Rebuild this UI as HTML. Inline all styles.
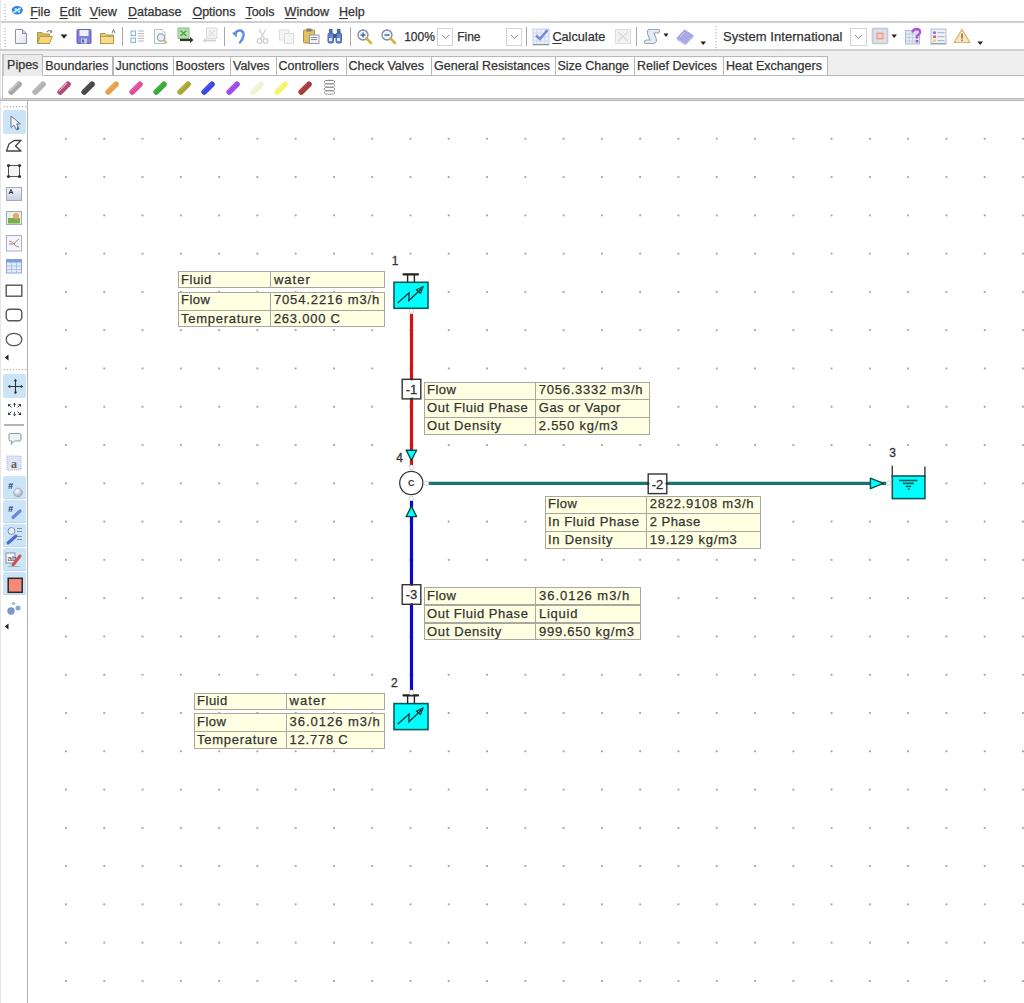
<!DOCTYPE html><html><head><meta charset="utf-8"><style>
*{margin:0;padding:0;box-sizing:border-box}
html,body{width:1024px;height:1003px;overflow:hidden;background:#fff;font-family:"Liberation Sans",sans-serif;color:#333}
.a{position:absolute}
.t{position:absolute;white-space:nowrap;line-height:1;-webkit-text-stroke:0.25px #333}
.menu span{position:absolute;top:4px;font-size:12.5px;color:#333}
.tab{position:absolute;top:56px;height:20px;border:1px solid #a8a8a8;border-bottom:none;background:#fff;font-size:12.5px;padding:3px 0 0 3px;color:#333}
.cell{font-size:13px;color:#333}
</style></head><body>
<div class="a" style="left:0;top:21px;width:1024px;height:1.5px;background:#cfcfcf"></div>
<div class="a" style="left:0;top:0;width:1px;height:1003px;background:#e6e6e6"></div>

<div class="a" style="left:0;top:49px;width:1024px;height:1.5px;background:#cfcfcf"></div>
<div class="a" style="left:2px;top:50.5px;width:1022px;height:25px;background:#efefef"></div>
<div class="a" style="left:2px;top:74.6px;width:1022px;height:1.2px;background:#b8b8b8"></div>
<div class="a" style="left:0px;top:97.7px;width:1024px;height:3.2px;background:#d2d2d2"></div>
<div class="a" style="left:2px;top:97.8px;width:1022px;height:1.1px;background:#bcbcbc"></div>
<div class="a" style="left:0px;top:99.6px;width:1024px;height:1.2px;background:#b8b8b8"></div>
<div class="a" style="left:2px;top:54px;width:1.3px;height:45px;background:#c4c4c4"></div>
<div class="a" style="left:26.5px;top:100px;width:1.5px;height:903px;background:#b0b0b0"></div>
<svg class="a" style="left:0px;top:0px" width="10" height="22" viewBox="0 0 10 22" ><rect x="4.5" y="4" width="1.2" height="1.2" fill="#b0b0b0"/><rect x="4.5" y="7" width="1.2" height="1.2" fill="#b0b0b0"/><rect x="4.5" y="10" width="1.2" height="1.2" fill="#b0b0b0"/><rect x="4.5" y="13" width="1.2" height="1.2" fill="#b0b0b0"/><rect x="4.5" y="16" width="1.2" height="1.2" fill="#b0b0b0"/><rect x="4.5" y="19" width="1.2" height="1.2" fill="#b0b0b0"/></svg>
<svg class="a" style="left:11px;top:5px" width="13" height="11" viewBox="0 0 13 11" ><ellipse cx="6.3" cy="5.3" rx="5.5" ry="4.2" fill="#2a86de"/><path d="M2.5 7.5 L9.5 3" stroke="#dff0ff" stroke-width="1.8"/><circle cx="4.8" cy="4.2" r="1.2" fill="#bfe0ff"/><circle cx="8" cy="6.5" r="1.2" fill="#bfe0ff"/></svg>
<div class="t" style="left:30.2px;top:5.8px;font-size:12.5px;color:#333"><span style="text-decoration:underline;text-underline-offset:1.5px">F</span>ile</div>
<div class="t" style="left:59.4px;top:5.8px;font-size:12.5px;color:#333"><span style="text-decoration:underline;text-underline-offset:1.5px">E</span>dit</div>
<div class="t" style="left:89.8px;top:5.8px;font-size:12.5px;color:#333"><span style="text-decoration:underline;text-underline-offset:1.5px">V</span>iew</div>
<div class="t" style="left:128px;top:5.8px;font-size:12.5px;color:#333"><span style="text-decoration:underline;text-underline-offset:1.5px">D</span>atabase</div>
<div class="t" style="left:192.4px;top:5.8px;font-size:12.5px;color:#333"><span style="text-decoration:underline;text-underline-offset:1.5px">O</span>ptions</div>
<div class="t" style="left:245.4px;top:5.8px;font-size:12.5px;color:#333"><span style="text-decoration:underline;text-underline-offset:1.5px">T</span>ools</div>
<div class="t" style="left:284.6px;top:5.8px;font-size:12.5px;color:#333"><span style="text-decoration:underline;text-underline-offset:1.5px">W</span>indow</div>
<div class="t" style="left:339px;top:5.8px;font-size:12.5px;color:#333"><span style="text-decoration:underline;text-underline-offset:1.5px">H</span>elp</div>
<svg class="a" style="left:0px;top:22px" width="10" height="28" viewBox="0 0 10 28" ><rect x="4.5" y="6" width="1.2" height="1.2" fill="#b0b0b0"/><rect x="4.5" y="9" width="1.2" height="1.2" fill="#b0b0b0"/><rect x="4.5" y="12" width="1.2" height="1.2" fill="#b0b0b0"/><rect x="4.5" y="15" width="1.2" height="1.2" fill="#b0b0b0"/><rect x="4.5" y="18" width="1.2" height="1.2" fill="#b0b0b0"/><rect x="4.5" y="21" width="1.2" height="1.2" fill="#b0b0b0"/><rect x="4.5" y="24" width="1.2" height="1.2" fill="#b0b0b0"/><rect x="4.5" y="27" width="1.2" height="1.2" fill="#b0b0b0"/></svg>
<div class="a" style="left:121.8px;top:26.5px;width:1.4px;height:19px;background:#a8a8a8"></div>
<div class="a" style="left:223.60000000000002px;top:26.5px;width:1.4px;height:19px;background:#a8a8a8"></div>
<div class="a" style="left:349.5px;top:26.5px;width:1.4px;height:19px;background:#a8a8a8"></div>
<div class="a" style="left:525.9px;top:26.5px;width:1.4px;height:19px;background:#a8a8a8"></div>
<div class="a" style="left:636.0999999999999px;top:26.5px;width:1.4px;height:19px;background:#a8a8a8"></div>
<svg class="a" style="left:714px;top:24px" width="4" height="26" viewBox="0 0 4 26" ><rect x="1.5" y="2" width="1.2" height="1.2" fill="#b8b8b8"/><rect x="1.5" y="5" width="1.2" height="1.2" fill="#b8b8b8"/><rect x="1.5" y="8" width="1.2" height="1.2" fill="#b8b8b8"/><rect x="1.5" y="11" width="1.2" height="1.2" fill="#b8b8b8"/><rect x="1.5" y="14" width="1.2" height="1.2" fill="#b8b8b8"/><rect x="1.5" y="17" width="1.2" height="1.2" fill="#b8b8b8"/><rect x="1.5" y="20" width="1.2" height="1.2" fill="#b8b8b8"/><rect x="1.5" y="23" width="1.2" height="1.2" fill="#b8b8b8"/></svg>
<svg class="a" style="left:14px;top:28px" width="14" height="17" viewBox="0 0 14 17" ><defs><linearGradient id="gd" x1="0" y1="0" x2="1" y2="1"><stop offset="0" stop-color="#fff"/><stop offset="1" stop-color="#dfe4ee"/></linearGradient></defs><path d="M1.5 1.5 H8.5 L12.5 5.5 V15.5 H1.5 Z" fill="url(#gd)" stroke="#8a93a8" stroke-width="1"/><path d="M8.5 1.5 V5.5 H12.5" fill="#c8cfdc" stroke="#8a93a8" stroke-width="1"/></svg>
<svg class="a" style="left:36px;top:28px" width="18" height="17" viewBox="0 0 18 17" ><path d="M1.5 4.5 H6 L7.5 6 H13.5 V15.5 H1.5 Z" fill="#d9b85a" stroke="#a88a3a" stroke-width="0.9"/><path d="M1.5 15.5 L4 8.5 H16.5 L13.5 15.5 Z" fill="#f4d77e" stroke="#b0923e" stroke-width="0.9"/><path d="M11 4 Q14 1 16 4" stroke="#6a7a9a" stroke-width="1.2" fill="none"/><path d="M15 2 L16.5 4.5 L14 5" fill="#6a7a9a"/></svg>
<svg class="a" style="left:59px;top:33px" width="10" height="7" viewBox="0 0 10 7" ><path d="M1.5 1.5 H8.5 L5 5.5 Z" fill="#222"/></svg>
<svg class="a" style="left:76px;top:28px" width="16" height="17" viewBox="0 0 16 17" ><rect x="1" y="1.5" width="14" height="14" rx="1" fill="#7f7fd8" stroke="#5a5ab0" stroke-width="0.9"/><rect x="3.5" y="2" width="9" height="6" fill="#eef0ff"/><rect x="5" y="10.5" width="6" height="5" fill="#c8c8f0"/><rect x="6" y="11.5" width="2" height="3" fill="#5a5ab0"/></svg>
<svg class="a" style="left:99px;top:28px" width="17" height="17" viewBox="0 0 17 17" ><path d="M1.5 5.5 H6 L7.5 7 H14.5 V15.5 H1.5 Z" fill="#e9cc70" stroke="#a88a3a" stroke-width="0.9"/><rect x="1.5" y="8.5" width="13" height="7" fill="#f6dc8c" stroke="#b0923e" stroke-width="0.8"/><path d="M13 5 L14.5 1.5 L16 5" stroke="#6a7a9a" stroke-width="1" fill="none"/></svg>
<svg class="a" style="left:129px;top:28px" width="17" height="17" viewBox="0 0 17 17" ><rect x="2" y="3" width="4.5" height="4.5" fill="#f4f8ff" stroke="#8ab0e0" stroke-width="1"/><rect x="2" y="10" width="4.5" height="4.5" fill="#f4f8ff" stroke="#8ab0e0" stroke-width="1"/><g fill="#b8b8b8"><rect x="9" y="2.5" width="6" height="1"/><rect x="9" y="5" width="6" height="1"/><rect x="9" y="7.5" width="6" height="1"/><rect x="9" y="10" width="6" height="1"/><rect x="9" y="12.5" width="6" height="1"/></g></svg>
<svg class="a" style="left:152px;top:28px" width="18" height="18" viewBox="0 0 18 18" ><path d="M2.5 1.5 H10 L13 4.5 V15.5 H2.5 Z" fill="#f8f8fa" stroke="#b0b4c0" stroke-width="0.9"/><circle cx="9" cy="9.5" r="3.6" fill="#e8eef6" stroke="#9aa4b8" stroke-width="1.1"/><path d="M11.5 12 L14.5 15" stroke="#e0a860" stroke-width="2"/></svg>
<svg class="a" style="left:177px;top:27px" width="18" height="19" viewBox="0 0 18 19" ><rect x="1" y="1" width="11" height="10.5" fill="#b8e0b0" stroke="#80b878" stroke-width="0.9"/><path d="M3.5 3.5 L9.5 9 M9.5 3.5 L3.5 9" stroke="#4aa04a" stroke-width="1.4"/><path d="M3 13 H14" stroke="#333" stroke-width="2.2"/><path d="M13 10 L16.5 13 L13 16 Z" fill="#333"/></svg>
<svg class="a" style="left:201px;top:27px" width="17" height="19" viewBox="0 0 17 19" ><rect x="5.5" y="1" width="10.5" height="10.5" fill="#f2f2f2" stroke="#dadada" stroke-width="0.9"/><path d="M8 3.5 L13.5 9 M13.5 3.5 L8 9" stroke="#dedede" stroke-width="1.1"/><path d="M3 13.5 H15" stroke="#d0d0d0" stroke-width="1.8"/><path d="M4.5 11 L1.5 13.5 L4.5 16 Z" fill="#d0d0d0"/></svg>
<svg class="a" style="left:231px;top:28px" width="15" height="16" viewBox="0 0 15 16" ><path d="M4 5.5 Q6 2 9.5 2.5 Q13 3.5 12.5 7.5 Q12 11 9 14.5" stroke="#6090e0" stroke-width="2.4" fill="none" stroke-linecap="round"/><path d="M1 5 L6.5 3 L5.5 9.5 Z" fill="#6090e0"/></svg>
<svg class="a" style="left:255px;top:27px" width="15" height="18" viewBox="0 0 15 18" ><path d="M4 2 L9.5 12 M11 2 L5.5 12" stroke="#d4d4d4" stroke-width="1.4"/><circle cx="4.5" cy="14" r="2.3" fill="none" stroke="#cfcfcf" stroke-width="1.3"/><circle cx="10.5" cy="14" r="2.3" fill="none" stroke="#cfcfcf" stroke-width="1.3"/></svg>
<svg class="a" style="left:278px;top:28px" width="18" height="17" viewBox="0 0 18 17" ><rect x="1.5" y="2" width="9" height="10" fill="#f4f4f4" stroke="#dcdcdc"/><rect x="6.5" y="5.5" width="9" height="10" fill="#f4f4f4" stroke="#dcdcdc"/></svg>
<svg class="a" style="left:302px;top:27px" width="19" height="18" viewBox="0 0 19 18" ><rect x="1.5" y="3" width="11" height="13" rx="1" fill="#e2c05c" stroke="#a8893a" stroke-width="0.9"/><rect x="4.5" y="1.5" width="5" height="3" fill="#7a7a7a"/><rect x="7.5" y="8" width="9.5" height="8.5" fill="#eef0f4" stroke="#8a93a8" stroke-width="0.9"/><rect x="9" y="10" width="6" height="1" fill="#8a93a8"/><rect x="9" y="12" width="6" height="1" fill="#8a93a8"/></svg>
<svg class="a" style="left:326px;top:27px" width="18" height="18" viewBox="0 0 18 18" ><rect x="2" y="6" width="5.5" height="10" rx="1.5" fill="#6a8ad0" stroke="#3a5aa0" stroke-width="0.9"/><rect x="10" y="6" width="5.5" height="10" rx="1.5" fill="#6a8ad0" stroke="#3a5aa0" stroke-width="0.9"/><rect x="3" y="2" width="3.5" height="5" fill="#4a6ab0"/><rect x="11" y="2" width="3.5" height="5" fill="#4a6ab0"/><rect x="7" y="7" width="3.5" height="4" fill="#3a5aa0"/><rect x="3" y="11" width="3" height="3" fill="#dfe8ff"/><rect x="11" y="11" width="3" height="3" fill="#dfe8ff"/></svg>
<svg class="a" style="left:356px;top:28px" width="17" height="17" viewBox="0 0 17 17" ><circle cx="7" cy="7" r="5" fill="#eef3fa" stroke="#7a8aa0" stroke-width="1.3"/><path d="M10.5 10.5 L15 15" stroke="#d8b040" stroke-width="2.6" stroke-linecap="round"/><path d="M4.5 7 H9.5" stroke="#4a6aa0" stroke-width="1.5"/><path d="M7 4.5 V9.5" stroke="#4a6aa0" stroke-width="1.5"/></svg>
<svg class="a" style="left:380px;top:28px" width="17" height="17" viewBox="0 0 17 17" ><circle cx="7" cy="7" r="5" fill="#eef3fa" stroke="#7a8aa0" stroke-width="1.3"/><path d="M10.5 10.5 L15 15" stroke="#d8b040" stroke-width="2.6" stroke-linecap="round"/><path d="M4.5 7 H9.5" stroke="#4a6aa0" stroke-width="1.5"/></svg>
<div class="t" style="left:404.2px;top:30.6px;font-size:12px;color:#333">100%</div>
<div class="t" style="left:457.2px;top:30.6px;font-size:12px;color:#333">Fine</div>
<div class="a" style="left:436.6px;top:27.7px;width:16px;height:18px;border:1px solid #d4d4d4;background:#fff"></div><svg class="a" style="left:440.6px;top:34px" width="9" height="6" viewBox="0 0 9 6" ><path d="M1 1 L4.5 4.5 L8 1" stroke="#888" stroke-width="1" fill="none"/></svg>
<div class="a" style="left:506.2px;top:27.7px;width:16px;height:18px;border:1px solid #d4d4d4;background:#fff"></div><svg class="a" style="left:510.2px;top:34px" width="9" height="6" viewBox="0 0 9 6" ><path d="M1 1 L4.5 4.5 L8 1" stroke="#888" stroke-width="1" fill="none"/></svg>
<div class="a" style="left:850.2px;top:27.7px;width:17px;height:18px;border:1px solid #d4d4d4;background:#fff"></div><svg class="a" style="left:854.2px;top:34px" width="9" height="6" viewBox="0 0 9 6" ><path d="M1 1 L4.5 4.5 L8 1" stroke="#888" stroke-width="1" fill="none"/></svg>
<svg class="a" style="left:532px;top:28px" width="18" height="18" viewBox="0 0 18 18" ><rect x="1" y="1" width="16" height="16" fill="#eef2fc" stroke="#b8c4dc" stroke-width="0.8"/><g stroke="#c8d4ec" stroke-width="0.8"><path d="M1 5 H17 M1 9 H17 M1 13 H17 M5 1 V17 M9 1 V17 M13 1 V17"/></g><path d="M1 16.5 H17" stroke="#9098a8" stroke-width="1.2"/><path d="M4 7.5 L8 11 L15.5 2" stroke="#7a88d8" stroke-width="2.6" fill="none"/></svg>
<div class="t" style="left:552.4px;top:30.6px;font-size:12.7px;color:#333"><span style="text-decoration:underline;text-underline-offset:1.5px">C</span>alculate</div>
<svg class="a" style="left:614px;top:27px" width="19" height="19" viewBox="0 0 19 19" ><rect x="1.5" y="2.5" width="15" height="14" fill="#f2f2f2" stroke="#dedede"/><path d="M4 5 L14 14 M14 5 L4 14" stroke="#dcdcdc" stroke-width="1.5"/></svg>
<svg class="a" style="left:643px;top:28px" width="18" height="17" viewBox="0 0 18 17" ><path d="M6 1.5 H15 Q17 1.5 16.5 3.5 Q16 5 14 5 H11 L13 10 Q14.5 14.5 11 15.5 H3 Q1 15.5 1.5 13.5 Q2 12 4 12 H7 L5 7 Q3.5 2 6 1.5 Z" fill="#e4ecf6" stroke="#98a4b8" stroke-width="1.1"/></svg>
<svg class="a" style="left:663px;top:33px" width="6" height="5" viewBox="0 0 6 5" ><path d="M0.5 0.5 H5.5 L3 4 Z" fill="#222"/></svg>
<svg class="a" style="left:676px;top:28px" width="18" height="17" viewBox="0 0 18 17" ><path d="M1 10 L8.5 2 L17 7.5 L9.5 15.5 Z" fill="#a8a8e8" stroke="#9090d0" stroke-width="0.8"/><path d="M1 10 V11.5 L9.5 17 L17 9 V7.5 L9.5 15.5 Z" fill="#d8d8f4" stroke="#a0a0d8" stroke-width="0.7"/><path d="M4 9 L9.5 3.5" stroke="#c8c8f4" stroke-width="1"/></svg>
<svg class="a" style="left:699.5px;top:41px" width="7" height="5" viewBox="0 0 7 5" ><path d="M0.5 0.5 H6 L3.2 4 Z" fill="#222"/></svg>
<div class="t" style="left:723px;top:29.7px;font-size:13px;letter-spacing:0.05px;color:#333">System International</div>
<svg class="a" style="left:871px;top:27px" width="18" height="18" viewBox="0 0 18 18" ><rect x="1.2" y="1.2" width="15.6" height="15.6" rx="1" fill="#d0d6e0" stroke="#b8c0cc" stroke-width="0.9"/><rect x="3" y="3" width="12" height="12" fill="#dde2ea"/><g fill="#f2a08c"><rect x="5.5" y="5.5" width="7" height="7"/></g><rect x="7.3" y="7.3" width="3.4" height="3.4" fill="#f4dcd4"/><g fill="#f2a08c"><rect x="4.5" y="6.5" width="1.2" height="1"/><rect x="12.3" y="6.5" width="1.2" height="1"/><rect x="4.5" y="10.5" width="1.2" height="1"/><rect x="12.3" y="10.5" width="1.2" height="1"/></g></svg>
<svg class="a" style="left:891px;top:33.5px" width="7" height="5" viewBox="0 0 7 5" ><path d="M0.5 0.5 H6 L3.2 4 Z" fill="#222"/></svg>
<svg class="a" style="left:904px;top:27px" width="20" height="19" viewBox="0 0 20 19" ><rect x="1.5" y="3.5" width="14" height="13.5" fill="#e4eaf6" stroke="#a8b4cc" stroke-width="0.9"/><g stroke="#b8c4dc" stroke-width="0.7"><path d="M1.5 7 H15.5 M1.5 10.5 H15.5 M1.5 14 H15.5 M5 3.5 V17 M8.5 3.5 V17 M12 3.5 V17"/></g><path d="M8.5 5.5 Q9 2 12.5 2 Q16.5 2 16 5.5 Q15.5 8 13 9 V11.5" stroke="#b050d8" stroke-width="2.4" fill="none"/><rect x="11.8" y="13" width="2.5" height="2.5" fill="#b050d8"/></svg>
<svg class="a" style="left:930px;top:28px" width="17" height="17" viewBox="0 0 17 17" ><rect x="1" y="1" width="15" height="15" fill="#eef2f8" stroke="#a8b4c8" stroke-width="0.9"/><rect x="1" y="15" width="15" height="1.2" fill="#9aa4b8"/><rect x="3" y="3.5" width="3" height="2.5" fill="#8080d8"/><rect x="3" y="7.5" width="3" height="2.5" fill="#e86060"/><rect x="3" y="11.5" width="3" height="2.5" fill="#e8d860"/><g fill="#b0bcd4"><rect x="7.5" y="4" width="7" height="1.2"/><rect x="7.5" y="8" width="7" height="1.2"/><rect x="7.5" y="12" width="7" height="1.2"/></g></svg>
<svg class="a" style="left:953px;top:28px" width="18" height="16" viewBox="0 0 18 16" ><path d="M9 1.5 L17 14.5 H1 Z" fill="#f8e6c0" stroke="#d8b070" stroke-width="1.2" stroke-linejoin="round"/><rect x="8.3" y="5.5" width="1.5" height="5" fill="#8a6a40"/><rect x="8.3" y="11.5" width="1.5" height="1.5" fill="#8a6a40"/></svg>
<svg class="a" style="left:976.5px;top:41px" width="7" height="5" viewBox="0 0 7 5" ><path d="M0.5 0.5 H6 L3.2 4 Z" fill="#222"/></svg>
<div class="a" style="left:2.6px;top:53.9px;width:40.1px;height:21.8px;background:#ebebeb;border:1.3px solid #c4c4c4;border-bottom:none"></div>
<div class="t" style="left:7.1px;top:58.7px;font-size:12.5px;color:#333">Pipes</div>
<div class="a" style="left:42.2px;top:55.6px;width:71.3px;height:19.2px;background:#fff;border:1.3px solid #b8b8b8;border-bottom:none"></div>
<div class="t" style="left:45.2px;top:60.3px;font-size:12.5px;color:#333">Boundaries</div>
<div class="a" style="left:112.5px;top:55.6px;width:61.0px;height:19.2px;background:#fff;border:1.3px solid #b8b8b8;border-bottom:none"></div>
<div class="t" style="left:115.5px;top:60.3px;font-size:12.5px;color:#333">Junctions</div>
<div class="a" style="left:172.5px;top:55.6px;width:58.5px;height:19.2px;background:#fff;border:1.3px solid #b8b8b8;border-bottom:none"></div>
<div class="t" style="left:175.5px;top:60.3px;font-size:12.5px;color:#333">Boosters</div>
<div class="a" style="left:230px;top:55.6px;width:46.5px;height:19.2px;background:#fff;border:1.3px solid #b8b8b8;border-bottom:none"></div>
<div class="t" style="left:233px;top:60.3px;font-size:12.5px;color:#333">Valves</div>
<div class="a" style="left:275.5px;top:55.6px;width:71.0px;height:19.2px;background:#fff;border:1.3px solid #b8b8b8;border-bottom:none"></div>
<div class="t" style="left:278.5px;top:60.3px;font-size:12.5px;color:#333">Controllers</div>
<div class="a" style="left:345.5px;top:55.6px;width:86.5px;height:19.2px;background:#fff;border:1.3px solid #b8b8b8;border-bottom:none"></div>
<div class="t" style="left:348.5px;top:60.3px;font-size:12.5px;color:#333">Check Valves</div>
<div class="a" style="left:431px;top:55.6px;width:124.5px;height:19.2px;background:#fff;border:1.3px solid #b8b8b8;border-bottom:none"></div>
<div class="t" style="left:434px;top:60.3px;font-size:12.5px;color:#333">General Resistances</div>
<div class="a" style="left:554.5px;top:55.6px;width:80.5px;height:19.2px;background:#fff;border:1.3px solid #b8b8b8;border-bottom:none"></div>
<div class="t" style="left:557.5px;top:60.3px;font-size:12.5px;color:#333">Size Change</div>
<div class="a" style="left:634px;top:55.6px;width:90px;height:19.2px;background:#fff;border:1.3px solid #b8b8b8;border-bottom:none"></div>
<div class="t" style="left:637px;top:60.3px;font-size:12.5px;color:#333">Relief Devices</div>
<div class="a" style="left:723px;top:55.6px;width:104.79999999999995px;height:19.2px;background:#fff;border:1.3px solid #b8b8b8;border-bottom:none"></div>
<div class="t" style="left:726px;top:60.3px;font-size:12.5px;color:#333">Heat Exchangers</div>
<svg class="a" style="left:7.199999999999999px;top:79.5px" width="16" height="16" viewBox="0 0 16 16" ><line x1="4.2" y1="12" x2="12" y2="4.2" stroke="#a8a8a8" stroke-width="5.6" stroke-linecap="round"/><line x1="3.2" y1="10.8" x2="10.8" y2="3.2" stroke="#d8d8d8" stroke-width="1.2" stroke-linecap="round" opacity="0.9"/></svg>
<svg class="a" style="left:31.349999999999994px;top:79.5px" width="16" height="16" viewBox="0 0 16 16" ><line x1="4.2" y1="12" x2="12" y2="4.2" stroke="#b4b4b4" stroke-width="5.6" stroke-linecap="round"/><line x1="3.2" y1="10.8" x2="10.8" y2="3.2" stroke="#c4c4c4" stroke-width="1.2" stroke-linecap="round" opacity="0.9"/></svg>
<svg class="a" style="left:55.5px;top:79.5px" width="16" height="16" viewBox="0 0 16 16" ><line x1="4.2" y1="12" x2="12" y2="4.2" stroke="#b04a7a" stroke-width="5.6" stroke-linecap="round"/><line x1="3.2" y1="10.8" x2="10.8" y2="3.2" stroke="#f8c0e0" stroke-width="1.2" stroke-linecap="round" opacity="0.9"/></svg>
<svg class="a" style="left:79.64999999999999px;top:79.5px" width="16" height="16" viewBox="0 0 16 16" ><line x1="4.2" y1="12" x2="12" y2="4.2" stroke="#484848" stroke-width="5.6" stroke-linecap="round"/><line x1="3.2" y1="10.8" x2="10.8" y2="3.2" stroke="#585858" stroke-width="1.2" stroke-linecap="round" opacity="0.9"/></svg>
<svg class="a" style="left:103.8px;top:79.5px" width="16" height="16" viewBox="0 0 16 16" ><line x1="4.2" y1="12" x2="12" y2="4.2" stroke="#e8a04a" stroke-width="5.6" stroke-linecap="round"/><line x1="3.2" y1="10.8" x2="10.8" y2="3.2" stroke="#f0b060" stroke-width="1.2" stroke-linecap="round" opacity="0.9"/></svg>
<svg class="a" style="left:127.94999999999999px;top:79.5px" width="16" height="16" viewBox="0 0 16 16" ><line x1="4.2" y1="12" x2="12" y2="4.2" stroke="#e0509a" stroke-width="5.6" stroke-linecap="round"/><line x1="3.2" y1="10.8" x2="10.8" y2="3.2" stroke="#e868a8" stroke-width="1.2" stroke-linecap="round" opacity="0.9"/></svg>
<svg class="a" style="left:152.09999999999997px;top:79.5px" width="16" height="16" viewBox="0 0 16 16" ><line x1="4.2" y1="12" x2="12" y2="4.2" stroke="#3aaa3a" stroke-width="5.6" stroke-linecap="round"/><line x1="3.2" y1="10.8" x2="10.8" y2="3.2" stroke="#50b850" stroke-width="1.2" stroke-linecap="round" opacity="0.9"/></svg>
<svg class="a" style="left:176.24999999999997px;top:79.5px" width="16" height="16" viewBox="0 0 16 16" ><line x1="4.2" y1="12" x2="12" y2="4.2" stroke="#a8a83a" stroke-width="5.6" stroke-linecap="round"/><line x1="3.2" y1="10.8" x2="10.8" y2="3.2" stroke="#b8b850" stroke-width="1.2" stroke-linecap="round" opacity="0.9"/></svg>
<svg class="a" style="left:200.39999999999998px;top:79.5px" width="16" height="16" viewBox="0 0 16 16" ><line x1="4.2" y1="12" x2="12" y2="4.2" stroke="#3a4ae0" stroke-width="5.6" stroke-linecap="round"/><line x1="3.2" y1="10.8" x2="10.8" y2="3.2" stroke="#5060e8" stroke-width="1.2" stroke-linecap="round" opacity="0.9"/></svg>
<svg class="a" style="left:224.54999999999998px;top:79.5px" width="16" height="16" viewBox="0 0 16 16" ><line x1="4.2" y1="12" x2="12" y2="4.2" stroke="#a04ae8" stroke-width="5.6" stroke-linecap="round"/><line x1="3.2" y1="10.8" x2="10.8" y2="3.2" stroke="#b060f0" stroke-width="1.2" stroke-linecap="round" opacity="0.9"/></svg>
<svg class="a" style="left:248.7px;top:79.5px" width="16" height="16" viewBox="0 0 16 16" ><line x1="4.2" y1="12" x2="12" y2="4.2" stroke="#f2f2d0" stroke-width="5.6" stroke-linecap="round"/><line x1="3.2" y1="10.8" x2="10.8" y2="3.2" stroke="#f8f8e0" stroke-width="1.2" stroke-linecap="round" opacity="0.9"/></svg>
<svg class="a" style="left:272.84999999999997px;top:79.5px" width="16" height="16" viewBox="0 0 16 16" ><line x1="4.2" y1="12" x2="12" y2="4.2" stroke="#f4f46a" stroke-width="5.6" stroke-linecap="round"/><line x1="3.2" y1="10.8" x2="10.8" y2="3.2" stroke="#f8f890" stroke-width="1.2" stroke-linecap="round" opacity="0.9"/></svg>
<svg class="a" style="left:296.99999999999994px;top:79.5px" width="16" height="16" viewBox="0 0 16 16" ><line x1="4.2" y1="12" x2="12" y2="4.2" stroke="#a83a3a" stroke-width="5.6" stroke-linecap="round"/><line x1="3.2" y1="10.8" x2="10.8" y2="3.2" stroke="#b85050" stroke-width="1.2" stroke-linecap="round" opacity="0.9"/></svg>
<svg class="a" style="left:322px;top:79px" width="15" height="18" viewBox="0 0 15 18" ><ellipse cx="7.5" cy="3" rx="5.5" ry="1.8" fill="none" stroke="#8a8a8a" stroke-width="0.9"/><ellipse cx="7.5" cy="6.5" rx="5.5" ry="1.8" fill="none" stroke="#8a8a8a" stroke-width="0.9"/><ellipse cx="7.5" cy="10" rx="5.5" ry="1.8" fill="none" stroke="#8a8a8a" stroke-width="0.9"/><ellipse cx="7.5" cy="13.5" rx="5.5" ry="1.8" fill="none" stroke="#8a8a8a" stroke-width="0.9"/><path d="M4 1.5 H11" stroke="#8a8a8a"/></svg>
<svg class="a" style="left:0px;top:105.5px" width="27" height="2" viewBox="0 0 27 2" ><rect x="4" y="0" width="1.2" height="1.2" fill="#b0b0b0"/><rect x="7" y="0" width="1.2" height="1.2" fill="#b0b0b0"/><rect x="10" y="0" width="1.2" height="1.2" fill="#b0b0b0"/><rect x="13" y="0" width="1.2" height="1.2" fill="#b0b0b0"/><rect x="16" y="0" width="1.2" height="1.2" fill="#b0b0b0"/><rect x="19" y="0" width="1.2" height="1.2" fill="#b0b0b0"/><rect x="22" y="0" width="1.2" height="1.2" fill="#b0b0b0"/><rect x="25" y="0" width="1.2" height="1.2" fill="#b0b0b0"/></svg>
<svg class="a" style="left:0px;top:369px" width="27" height="2" viewBox="0 0 27 2" ><rect x="4" y="0" width="1.2" height="1.2" fill="#b0b0b0"/><rect x="7" y="0" width="1.2" height="1.2" fill="#b0b0b0"/><rect x="10" y="0" width="1.2" height="1.2" fill="#b0b0b0"/><rect x="13" y="0" width="1.2" height="1.2" fill="#b0b0b0"/><rect x="16" y="0" width="1.2" height="1.2" fill="#b0b0b0"/><rect x="19" y="0" width="1.2" height="1.2" fill="#b0b0b0"/><rect x="22" y="0" width="1.2" height="1.2" fill="#b0b0b0"/><rect x="25" y="0" width="1.2" height="1.2" fill="#b0b0b0"/></svg>
<div class="a" style="left:2.5px;top:110px;width:23.5px;height:23.599999999999994px;background:#cce4f7;border-radius:2px"></div>
<div class="a" style="left:2.5px;top:374px;width:23.5px;height:23.80000000000001px;background:#cce4f7;border-radius:2px"></div>
<div class="a" style="left:2.5px;top:476px;width:23.5px;height:23.4px;background:#cce4f7;border-radius:2px;box-shadow:inset 0 -1px 0 #b8d8f0"></div>
<div class="a" style="left:2.5px;top:500px;width:23.5px;height:23.4px;background:#cce4f7;border-radius:2px;box-shadow:inset 0 -1px 0 #b8d8f0"></div>
<div class="a" style="left:2.5px;top:524px;width:23.5px;height:23.4px;background:#cce4f7;border-radius:2px;box-shadow:inset 0 -1px 0 #b8d8f0"></div>
<div class="a" style="left:2.5px;top:548px;width:23.5px;height:23.4px;background:#cce4f7;border-radius:2px;box-shadow:inset 0 -1px 0 #b8d8f0"></div>
<div class="a" style="left:2.5px;top:572px;width:23.5px;height:23.4px;background:#cce4f7;border-radius:2px;box-shadow:inset 0 -1px 0 #b8d8f0"></div>
<svg class="a" style="left:9.5px;top:114.5px" width="12" height="17" viewBox="0 0 12 17" ><path d="M1 1 V12.5 L4 10 L6.5 15 L9 14 L6.7 9 L10.5 9 Z" fill="#f4f6fa" stroke="#6a7890" stroke-width="1" stroke-linejoin="round"/><path d="M6.5 14.5 L9 14 L7.5 11" fill="#4a6aa0"/></svg>
<svg class="a" style="left:5px;top:139px" width="18" height="14" viewBox="0 0 18 14" ><path d="M1.5 12 L4 5 L9 1.5 H16 L10.5 7 L16 12 Z" fill="none" stroke="#444" stroke-width="1.3" stroke-linejoin="round"/></svg>
<svg class="a" style="left:6px;top:163px" width="16" height="16" viewBox="0 0 16 16" ><rect x="2.5" y="2.5" width="11" height="11" fill="#f4f6fa" stroke="#555" stroke-width="1"/><g fill="#333"><circle cx="2.5" cy="2.5" r="1.6"/><circle cx="13.5" cy="2.5" r="1.6"/><circle cx="2.5" cy="13.5" r="1.6"/><circle cx="13.5" cy="13.5" r="1.6"/></g></svg>
<svg class="a" style="left:6px;top:187px" width="16" height="15" viewBox="0 0 16 15" ><defs><linearGradient id="ga" x1="0" y1="0" x2="0" y2="1"><stop offset="0" stop-color="#f4f6fa"/><stop offset="1" stop-color="#c8cee0"/></linearGradient></defs><rect x="0.5" y="0.5" width="15" height="13" fill="url(#ga)" stroke="#a0a8c0"/><path d="M3 7 L5 2.5 L7 7 M3.7 5.5 H6.3" stroke="#333" stroke-width="1" fill="none"/></svg>
<svg class="a" style="left:6px;top:211px" width="16" height="15" viewBox="0 0 16 15" ><rect x="0.5" y="0.5" width="15" height="13" fill="#e8f0e0" stroke="#a0a8c0"/><rect x="2" y="7" width="12" height="5.5" fill="#7ab04a"/><circle cx="10" cy="5" r="3" fill="#f0a070"/></svg>
<svg class="a" style="left:6px;top:235px" width="16" height="17" viewBox="0 0 16 17" ><rect x="0.5" y="0.5" width="15" height="15.5" fill="#f4f6fa" stroke="#a8b0c8"/><path d="M3 6 Q7 7 8 9 Q10 6 13 4 M8 9 Q10 12 13 12" stroke="#c08060" stroke-width="1" fill="none"/><path d="M3 9 H7" stroke="#8090b0" stroke-width="1"/></svg>
<svg class="a" style="left:6px;top:259px" width="16" height="15" viewBox="0 0 16 15" ><rect x="0.5" y="0.5" width="15" height="13.5" fill="#e4ecf8" stroke="#8aa8d8"/><rect x="0.5" y="0.5" width="15" height="3" fill="#7aa0dc"/><g stroke="#9ab8e0" stroke-width="0.7"><path d="M0.5 7 H15.5 M0.5 10.5 H15.5 M5.5 3.5 V14 M10.5 3.5 V14"/></g></svg>
<svg class="a" style="left:5px;top:284px" width="18" height="14" viewBox="0 0 18 14" ><rect x="1.2" y="1.2" width="15.6" height="11" fill="none" stroke="#555" stroke-width="1.4"/></svg>
<svg class="a" style="left:5px;top:308px" width="18" height="15" viewBox="0 0 18 15" ><rect x="1.2" y="1.2" width="15.6" height="11.5" rx="3.5" fill="none" stroke="#555" stroke-width="1.4"/></svg>
<svg class="a" style="left:5px;top:332px" width="18" height="16" viewBox="0 0 18 16" ><ellipse cx="9" cy="7.5" rx="7.8" ry="6.2" fill="none" stroke="#555" stroke-width="1.3"/></svg>
<svg class="a" style="left:4px;top:354px" width="6" height="7" viewBox="0 0 6 7" ><path d="M4.5 0.5 V6.5 L0.8 3.5 Z" fill="#222"/></svg>
<svg class="a" style="left:7px;top:378px" width="17" height="17" viewBox="0 0 17 17" ><path d="M8.5 2 V15 M2 8.5 H15" stroke="#2a3440" stroke-width="1.1"/><path d="M8.5 0.8 L6.8 3.2 H10.2 Z M8.5 16.2 L6.8 13.8 H10.2 Z M0.8 8.5 L3.2 6.8 V10.2 Z M16.2 8.5 L13.8 6.8 V10.2 Z" fill="#2a3440"/></svg>
<svg class="a" style="left:6px;top:401px" width="17" height="17" viewBox="0 0 17 17" ><g stroke="#3a4450" stroke-width="0.9" fill="none"><path d="M3 4 L5.5 6.5 M8.5 2.5 V6 M14 4 L11.5 6.5 M3 13 L5.5 10.5 M8.5 14.5 V11 M14 13 L11.5 10.5"/></g><g fill="#3a4450"><path d="M2 3 L5 3 L2 6 Z"/><path d="M15 3 L12 3 L15 6 Z"/><path d="M2 14 L5 14 L2 11 Z"/><path d="M15 14 L12 14 L15 11 Z"/><path d="M7 4 L8.5 1.5 L10 4 Z"/><path d="M7 13 L8.5 15.5 L10 13 Z"/></g></svg>
<div class="a" style="left:4px;top:424.2px;width:20px;height:1.8px;background:#b4b4b4"></div>
<svg class="a" style="left:8px;top:432px" width="14" height="15" viewBox="0 0 14 15" ><path d="M2.5 1.5 H11.5 Q13 1.5 13 3 V7.5 Q13 9 11.5 9 H6.5 L3 12.5 L4 9 H2.5 Q1 9 1 7.5 V3 Q1 1.5 2.5 1.5 Z" fill="#f0f2f6" stroke="#8a94a4" stroke-width="1"/></svg>
<svg class="a" style="left:6px;top:455px" width="16" height="16" viewBox="0 0 16 16" ><rect x="1" y="1" width="14" height="14" fill="#dfe4f4" stroke="#b0b8dc" stroke-dasharray="1.2 0.8"/><text x="8" y="12.5" font-size="12" font-weight="bold" text-anchor="middle" fill="#606060" font-family="Liberation Serif">a</text></svg>
<svg class="a" style="left:5px;top:479px" width="19" height="19" viewBox="0 0 19 19" ><text x="3" y="10" font-size="9" font-weight="bold" font-style="italic" fill="#1a2a7a" font-family="Liberation Sans">#</text><defs><radialGradient id="sph" cx="0.4" cy="0.35" r="0.7"><stop offset="0" stop-color="#fff"/><stop offset="1" stop-color="#9aa4b4"/></radialGradient></defs><circle cx="13" cy="13.5" r="4.3" fill="url(#sph)" stroke="#8a94a8" stroke-width="0.6"/></svg>
<svg class="a" style="left:5px;top:502px" width="19" height="19" viewBox="0 0 19 19" ><text x="3" y="10" font-size="9" font-weight="bold" font-style="italic" fill="#1a2a7a" font-family="Liberation Sans">#</text><line x1="8" y1="15.5" x2="15" y2="9" stroke="#6a8ad8" stroke-width="3.2" stroke-linecap="round"/></svg>
<svg class="a" style="left:5px;top:526px" width="19" height="20" viewBox="0 0 19 20" ><circle cx="6.5" cy="5" r="3.5" fill="#e8ecf4" stroke="#8090b0"/><line x1="3" y1="17" x2="11" y2="10" stroke="#4a6ad0" stroke-width="3" stroke-linecap="round"/><g fill="#8090a0"><rect x="12" y="2" width="5" height="1"/><rect x="12" y="5" width="5" height="1"/><rect x="12" y="10" width="5" height="1"/><rect x="12" y="13" width="5" height="1"/></g></svg>
<svg class="a" style="left:5px;top:550px" width="19" height="20" viewBox="0 0 19 20" ><rect x="1" y="3" width="9" height="10" fill="#f4f6fa" stroke="#8090b0"/><text x="2.5" y="11" font-size="8" fill="#444" font-family="Liberation Sans">ab</text><path d="M8 15 L15 6" stroke="#d05050" stroke-width="3" stroke-linecap="round"/><path d="M3 16.5 H15" stroke="#90a0b8" stroke-width="0.7"/></svg>
<svg class="a" style="left:5px;top:575px" width="19" height="21" viewBox="0 0 19 21" ><rect x="3.2" y="3.3" width="14" height="14" fill="#f88878" stroke="#2a2a2a" stroke-width="1.5"/></svg>
<svg class="a" style="left:5px;top:598px" width="19" height="19" viewBox="0 0 19 19" ><circle cx="6" cy="13" r="3.7" fill="#7a9ac8"/><circle cx="13" cy="10" r="2.5" fill="#8aa8d0"/><circle cx="8.5" cy="5.5" r="1.8" fill="#b0c8c0"/></svg>
<svg class="a" style="left:4px;top:623px" width="6" height="7" viewBox="0 0 6 7" ><path d="M4.5 0.5 V6.5 L0.8 3.5 Z" fill="#222"/></svg>
<svg class="a" style="left:0;top:0" width="1024" height="1003"><g fill="#a6a6a6"><rect x="65.0" y="137.8" width="1.9" height="1.9"/><rect x="65.0" y="176.1" width="1.9" height="1.9"/><rect x="65.0" y="214.4" width="1.9" height="1.9"/><rect x="65.0" y="252.7" width="1.9" height="1.9"/><rect x="65.0" y="290.9" width="1.9" height="1.9"/><rect x="65.0" y="329.2" width="1.9" height="1.9"/><rect x="65.0" y="367.5" width="1.9" height="1.9"/><rect x="65.0" y="405.8" width="1.9" height="1.9"/><rect x="65.0" y="444.1" width="1.9" height="1.9"/><rect x="65.0" y="482.4" width="1.9" height="1.9"/><rect x="65.0" y="520.6" width="1.9" height="1.9"/><rect x="65.0" y="558.9" width="1.9" height="1.9"/><rect x="65.0" y="597.2" width="1.9" height="1.9"/><rect x="65.0" y="635.5" width="1.9" height="1.9"/><rect x="65.0" y="673.8" width="1.9" height="1.9"/><rect x="65.0" y="712.0" width="1.9" height="1.9"/><rect x="65.0" y="750.3" width="1.9" height="1.9"/><rect x="65.0" y="788.6" width="1.9" height="1.9"/><rect x="65.0" y="826.9" width="1.9" height="1.9"/><rect x="65.0" y="865.1" width="1.9" height="1.9"/><rect x="65.0" y="903.4" width="1.9" height="1.9"/><rect x="65.0" y="941.7" width="1.9" height="1.9"/><rect x="65.0" y="980.0" width="1.9" height="1.9"/><rect x="103.3" y="137.8" width="1.9" height="1.9"/><rect x="103.3" y="176.1" width="1.9" height="1.9"/><rect x="103.3" y="214.4" width="1.9" height="1.9"/><rect x="103.3" y="252.7" width="1.9" height="1.9"/><rect x="103.3" y="290.9" width="1.9" height="1.9"/><rect x="103.3" y="329.2" width="1.9" height="1.9"/><rect x="103.3" y="367.5" width="1.9" height="1.9"/><rect x="103.3" y="405.8" width="1.9" height="1.9"/><rect x="103.3" y="444.1" width="1.9" height="1.9"/><rect x="103.3" y="482.4" width="1.9" height="1.9"/><rect x="103.3" y="520.6" width="1.9" height="1.9"/><rect x="103.3" y="558.9" width="1.9" height="1.9"/><rect x="103.3" y="597.2" width="1.9" height="1.9"/><rect x="103.3" y="635.5" width="1.9" height="1.9"/><rect x="103.3" y="673.8" width="1.9" height="1.9"/><rect x="103.3" y="712.0" width="1.9" height="1.9"/><rect x="103.3" y="750.3" width="1.9" height="1.9"/><rect x="103.3" y="788.6" width="1.9" height="1.9"/><rect x="103.3" y="826.9" width="1.9" height="1.9"/><rect x="103.3" y="865.1" width="1.9" height="1.9"/><rect x="103.3" y="903.4" width="1.9" height="1.9"/><rect x="103.3" y="941.7" width="1.9" height="1.9"/><rect x="103.3" y="980.0" width="1.9" height="1.9"/><rect x="141.6" y="137.8" width="1.9" height="1.9"/><rect x="141.6" y="176.1" width="1.9" height="1.9"/><rect x="141.6" y="214.4" width="1.9" height="1.9"/><rect x="141.6" y="252.7" width="1.9" height="1.9"/><rect x="141.6" y="290.9" width="1.9" height="1.9"/><rect x="141.6" y="329.2" width="1.9" height="1.9"/><rect x="141.6" y="367.5" width="1.9" height="1.9"/><rect x="141.6" y="405.8" width="1.9" height="1.9"/><rect x="141.6" y="444.1" width="1.9" height="1.9"/><rect x="141.6" y="482.4" width="1.9" height="1.9"/><rect x="141.6" y="520.6" width="1.9" height="1.9"/><rect x="141.6" y="558.9" width="1.9" height="1.9"/><rect x="141.6" y="597.2" width="1.9" height="1.9"/><rect x="141.6" y="635.5" width="1.9" height="1.9"/><rect x="141.6" y="673.8" width="1.9" height="1.9"/><rect x="141.6" y="712.0" width="1.9" height="1.9"/><rect x="141.6" y="750.3" width="1.9" height="1.9"/><rect x="141.6" y="788.6" width="1.9" height="1.9"/><rect x="141.6" y="826.9" width="1.9" height="1.9"/><rect x="141.6" y="865.1" width="1.9" height="1.9"/><rect x="141.6" y="903.4" width="1.9" height="1.9"/><rect x="141.6" y="941.7" width="1.9" height="1.9"/><rect x="141.6" y="980.0" width="1.9" height="1.9"/><rect x="179.9" y="137.8" width="1.9" height="1.9"/><rect x="179.9" y="176.1" width="1.9" height="1.9"/><rect x="179.9" y="214.4" width="1.9" height="1.9"/><rect x="179.9" y="252.7" width="1.9" height="1.9"/><rect x="179.9" y="290.9" width="1.9" height="1.9"/><rect x="179.9" y="329.2" width="1.9" height="1.9"/><rect x="179.9" y="367.5" width="1.9" height="1.9"/><rect x="179.9" y="405.8" width="1.9" height="1.9"/><rect x="179.9" y="444.1" width="1.9" height="1.9"/><rect x="179.9" y="482.4" width="1.9" height="1.9"/><rect x="179.9" y="520.6" width="1.9" height="1.9"/><rect x="179.9" y="558.9" width="1.9" height="1.9"/><rect x="179.9" y="597.2" width="1.9" height="1.9"/><rect x="179.9" y="635.5" width="1.9" height="1.9"/><rect x="179.9" y="673.8" width="1.9" height="1.9"/><rect x="179.9" y="712.0" width="1.9" height="1.9"/><rect x="179.9" y="750.3" width="1.9" height="1.9"/><rect x="179.9" y="788.6" width="1.9" height="1.9"/><rect x="179.9" y="826.9" width="1.9" height="1.9"/><rect x="179.9" y="865.1" width="1.9" height="1.9"/><rect x="179.9" y="903.4" width="1.9" height="1.9"/><rect x="179.9" y="941.7" width="1.9" height="1.9"/><rect x="179.9" y="980.0" width="1.9" height="1.9"/><rect x="218.2" y="137.8" width="1.9" height="1.9"/><rect x="218.2" y="176.1" width="1.9" height="1.9"/><rect x="218.2" y="214.4" width="1.9" height="1.9"/><rect x="218.2" y="252.7" width="1.9" height="1.9"/><rect x="218.2" y="290.9" width="1.9" height="1.9"/><rect x="218.2" y="329.2" width="1.9" height="1.9"/><rect x="218.2" y="367.5" width="1.9" height="1.9"/><rect x="218.2" y="405.8" width="1.9" height="1.9"/><rect x="218.2" y="444.1" width="1.9" height="1.9"/><rect x="218.2" y="482.4" width="1.9" height="1.9"/><rect x="218.2" y="520.6" width="1.9" height="1.9"/><rect x="218.2" y="558.9" width="1.9" height="1.9"/><rect x="218.2" y="597.2" width="1.9" height="1.9"/><rect x="218.2" y="635.5" width="1.9" height="1.9"/><rect x="218.2" y="673.8" width="1.9" height="1.9"/><rect x="218.2" y="712.0" width="1.9" height="1.9"/><rect x="218.2" y="750.3" width="1.9" height="1.9"/><rect x="218.2" y="788.6" width="1.9" height="1.9"/><rect x="218.2" y="826.9" width="1.9" height="1.9"/><rect x="218.2" y="865.1" width="1.9" height="1.9"/><rect x="218.2" y="903.4" width="1.9" height="1.9"/><rect x="218.2" y="941.7" width="1.9" height="1.9"/><rect x="218.2" y="980.0" width="1.9" height="1.9"/><rect x="256.4" y="137.8" width="1.9" height="1.9"/><rect x="256.4" y="176.1" width="1.9" height="1.9"/><rect x="256.4" y="214.4" width="1.9" height="1.9"/><rect x="256.4" y="252.7" width="1.9" height="1.9"/><rect x="256.4" y="290.9" width="1.9" height="1.9"/><rect x="256.4" y="329.2" width="1.9" height="1.9"/><rect x="256.4" y="367.5" width="1.9" height="1.9"/><rect x="256.4" y="405.8" width="1.9" height="1.9"/><rect x="256.4" y="444.1" width="1.9" height="1.9"/><rect x="256.4" y="482.4" width="1.9" height="1.9"/><rect x="256.4" y="520.6" width="1.9" height="1.9"/><rect x="256.4" y="558.9" width="1.9" height="1.9"/><rect x="256.4" y="597.2" width="1.9" height="1.9"/><rect x="256.4" y="635.5" width="1.9" height="1.9"/><rect x="256.4" y="673.8" width="1.9" height="1.9"/><rect x="256.4" y="712.0" width="1.9" height="1.9"/><rect x="256.4" y="750.3" width="1.9" height="1.9"/><rect x="256.4" y="788.6" width="1.9" height="1.9"/><rect x="256.4" y="826.9" width="1.9" height="1.9"/><rect x="256.4" y="865.1" width="1.9" height="1.9"/><rect x="256.4" y="903.4" width="1.9" height="1.9"/><rect x="256.4" y="941.7" width="1.9" height="1.9"/><rect x="256.4" y="980.0" width="1.9" height="1.9"/><rect x="294.7" y="137.8" width="1.9" height="1.9"/><rect x="294.7" y="176.1" width="1.9" height="1.9"/><rect x="294.7" y="214.4" width="1.9" height="1.9"/><rect x="294.7" y="252.7" width="1.9" height="1.9"/><rect x="294.7" y="290.9" width="1.9" height="1.9"/><rect x="294.7" y="329.2" width="1.9" height="1.9"/><rect x="294.7" y="367.5" width="1.9" height="1.9"/><rect x="294.7" y="405.8" width="1.9" height="1.9"/><rect x="294.7" y="444.1" width="1.9" height="1.9"/><rect x="294.7" y="482.4" width="1.9" height="1.9"/><rect x="294.7" y="520.6" width="1.9" height="1.9"/><rect x="294.7" y="558.9" width="1.9" height="1.9"/><rect x="294.7" y="597.2" width="1.9" height="1.9"/><rect x="294.7" y="635.5" width="1.9" height="1.9"/><rect x="294.7" y="673.8" width="1.9" height="1.9"/><rect x="294.7" y="712.0" width="1.9" height="1.9"/><rect x="294.7" y="750.3" width="1.9" height="1.9"/><rect x="294.7" y="788.6" width="1.9" height="1.9"/><rect x="294.7" y="826.9" width="1.9" height="1.9"/><rect x="294.7" y="865.1" width="1.9" height="1.9"/><rect x="294.7" y="903.4" width="1.9" height="1.9"/><rect x="294.7" y="941.7" width="1.9" height="1.9"/><rect x="294.7" y="980.0" width="1.9" height="1.9"/><rect x="333.0" y="137.8" width="1.9" height="1.9"/><rect x="333.0" y="176.1" width="1.9" height="1.9"/><rect x="333.0" y="214.4" width="1.9" height="1.9"/><rect x="333.0" y="252.7" width="1.9" height="1.9"/><rect x="333.0" y="290.9" width="1.9" height="1.9"/><rect x="333.0" y="329.2" width="1.9" height="1.9"/><rect x="333.0" y="367.5" width="1.9" height="1.9"/><rect x="333.0" y="405.8" width="1.9" height="1.9"/><rect x="333.0" y="444.1" width="1.9" height="1.9"/><rect x="333.0" y="482.4" width="1.9" height="1.9"/><rect x="333.0" y="520.6" width="1.9" height="1.9"/><rect x="333.0" y="558.9" width="1.9" height="1.9"/><rect x="333.0" y="597.2" width="1.9" height="1.9"/><rect x="333.0" y="635.5" width="1.9" height="1.9"/><rect x="333.0" y="673.8" width="1.9" height="1.9"/><rect x="333.0" y="712.0" width="1.9" height="1.9"/><rect x="333.0" y="750.3" width="1.9" height="1.9"/><rect x="333.0" y="788.6" width="1.9" height="1.9"/><rect x="333.0" y="826.9" width="1.9" height="1.9"/><rect x="333.0" y="865.1" width="1.9" height="1.9"/><rect x="333.0" y="903.4" width="1.9" height="1.9"/><rect x="333.0" y="941.7" width="1.9" height="1.9"/><rect x="333.0" y="980.0" width="1.9" height="1.9"/><rect x="371.3" y="137.8" width="1.9" height="1.9"/><rect x="371.3" y="176.1" width="1.9" height="1.9"/><rect x="371.3" y="214.4" width="1.9" height="1.9"/><rect x="371.3" y="252.7" width="1.9" height="1.9"/><rect x="371.3" y="290.9" width="1.9" height="1.9"/><rect x="371.3" y="329.2" width="1.9" height="1.9"/><rect x="371.3" y="367.5" width="1.9" height="1.9"/><rect x="371.3" y="405.8" width="1.9" height="1.9"/><rect x="371.3" y="444.1" width="1.9" height="1.9"/><rect x="371.3" y="482.4" width="1.9" height="1.9"/><rect x="371.3" y="520.6" width="1.9" height="1.9"/><rect x="371.3" y="558.9" width="1.9" height="1.9"/><rect x="371.3" y="597.2" width="1.9" height="1.9"/><rect x="371.3" y="635.5" width="1.9" height="1.9"/><rect x="371.3" y="673.8" width="1.9" height="1.9"/><rect x="371.3" y="712.0" width="1.9" height="1.9"/><rect x="371.3" y="750.3" width="1.9" height="1.9"/><rect x="371.3" y="788.6" width="1.9" height="1.9"/><rect x="371.3" y="826.9" width="1.9" height="1.9"/><rect x="371.3" y="865.1" width="1.9" height="1.9"/><rect x="371.3" y="903.4" width="1.9" height="1.9"/><rect x="371.3" y="941.7" width="1.9" height="1.9"/><rect x="371.3" y="980.0" width="1.9" height="1.9"/><rect x="409.6" y="137.8" width="1.9" height="1.9"/><rect x="409.6" y="176.1" width="1.9" height="1.9"/><rect x="409.6" y="214.4" width="1.9" height="1.9"/><rect x="409.6" y="252.7" width="1.9" height="1.9"/><rect x="409.6" y="290.9" width="1.9" height="1.9"/><rect x="409.6" y="329.2" width="1.9" height="1.9"/><rect x="409.6" y="367.5" width="1.9" height="1.9"/><rect x="409.6" y="405.8" width="1.9" height="1.9"/><rect x="409.6" y="444.1" width="1.9" height="1.9"/><rect x="409.6" y="482.4" width="1.9" height="1.9"/><rect x="409.6" y="520.6" width="1.9" height="1.9"/><rect x="409.6" y="558.9" width="1.9" height="1.9"/><rect x="409.6" y="597.2" width="1.9" height="1.9"/><rect x="409.6" y="635.5" width="1.9" height="1.9"/><rect x="409.6" y="673.8" width="1.9" height="1.9"/><rect x="409.6" y="712.0" width="1.9" height="1.9"/><rect x="409.6" y="750.3" width="1.9" height="1.9"/><rect x="409.6" y="788.6" width="1.9" height="1.9"/><rect x="409.6" y="826.9" width="1.9" height="1.9"/><rect x="409.6" y="865.1" width="1.9" height="1.9"/><rect x="409.6" y="903.4" width="1.9" height="1.9"/><rect x="409.6" y="941.7" width="1.9" height="1.9"/><rect x="409.6" y="980.0" width="1.9" height="1.9"/><rect x="447.8" y="137.8" width="1.9" height="1.9"/><rect x="447.8" y="176.1" width="1.9" height="1.9"/><rect x="447.8" y="214.4" width="1.9" height="1.9"/><rect x="447.8" y="252.7" width="1.9" height="1.9"/><rect x="447.8" y="290.9" width="1.9" height="1.9"/><rect x="447.8" y="329.2" width="1.9" height="1.9"/><rect x="447.8" y="367.5" width="1.9" height="1.9"/><rect x="447.8" y="405.8" width="1.9" height="1.9"/><rect x="447.8" y="444.1" width="1.9" height="1.9"/><rect x="447.8" y="482.4" width="1.9" height="1.9"/><rect x="447.8" y="520.6" width="1.9" height="1.9"/><rect x="447.8" y="558.9" width="1.9" height="1.9"/><rect x="447.8" y="597.2" width="1.9" height="1.9"/><rect x="447.8" y="635.5" width="1.9" height="1.9"/><rect x="447.8" y="673.8" width="1.9" height="1.9"/><rect x="447.8" y="712.0" width="1.9" height="1.9"/><rect x="447.8" y="750.3" width="1.9" height="1.9"/><rect x="447.8" y="788.6" width="1.9" height="1.9"/><rect x="447.8" y="826.9" width="1.9" height="1.9"/><rect x="447.8" y="865.1" width="1.9" height="1.9"/><rect x="447.8" y="903.4" width="1.9" height="1.9"/><rect x="447.8" y="941.7" width="1.9" height="1.9"/><rect x="447.8" y="980.0" width="1.9" height="1.9"/><rect x="486.1" y="137.8" width="1.9" height="1.9"/><rect x="486.1" y="176.1" width="1.9" height="1.9"/><rect x="486.1" y="214.4" width="1.9" height="1.9"/><rect x="486.1" y="252.7" width="1.9" height="1.9"/><rect x="486.1" y="290.9" width="1.9" height="1.9"/><rect x="486.1" y="329.2" width="1.9" height="1.9"/><rect x="486.1" y="367.5" width="1.9" height="1.9"/><rect x="486.1" y="405.8" width="1.9" height="1.9"/><rect x="486.1" y="444.1" width="1.9" height="1.9"/><rect x="486.1" y="482.4" width="1.9" height="1.9"/><rect x="486.1" y="520.6" width="1.9" height="1.9"/><rect x="486.1" y="558.9" width="1.9" height="1.9"/><rect x="486.1" y="597.2" width="1.9" height="1.9"/><rect x="486.1" y="635.5" width="1.9" height="1.9"/><rect x="486.1" y="673.8" width="1.9" height="1.9"/><rect x="486.1" y="712.0" width="1.9" height="1.9"/><rect x="486.1" y="750.3" width="1.9" height="1.9"/><rect x="486.1" y="788.6" width="1.9" height="1.9"/><rect x="486.1" y="826.9" width="1.9" height="1.9"/><rect x="486.1" y="865.1" width="1.9" height="1.9"/><rect x="486.1" y="903.4" width="1.9" height="1.9"/><rect x="486.1" y="941.7" width="1.9" height="1.9"/><rect x="486.1" y="980.0" width="1.9" height="1.9"/><rect x="524.4" y="137.8" width="1.9" height="1.9"/><rect x="524.4" y="176.1" width="1.9" height="1.9"/><rect x="524.4" y="214.4" width="1.9" height="1.9"/><rect x="524.4" y="252.7" width="1.9" height="1.9"/><rect x="524.4" y="290.9" width="1.9" height="1.9"/><rect x="524.4" y="329.2" width="1.9" height="1.9"/><rect x="524.4" y="367.5" width="1.9" height="1.9"/><rect x="524.4" y="405.8" width="1.9" height="1.9"/><rect x="524.4" y="444.1" width="1.9" height="1.9"/><rect x="524.4" y="482.4" width="1.9" height="1.9"/><rect x="524.4" y="520.6" width="1.9" height="1.9"/><rect x="524.4" y="558.9" width="1.9" height="1.9"/><rect x="524.4" y="597.2" width="1.9" height="1.9"/><rect x="524.4" y="635.5" width="1.9" height="1.9"/><rect x="524.4" y="673.8" width="1.9" height="1.9"/><rect x="524.4" y="712.0" width="1.9" height="1.9"/><rect x="524.4" y="750.3" width="1.9" height="1.9"/><rect x="524.4" y="788.6" width="1.9" height="1.9"/><rect x="524.4" y="826.9" width="1.9" height="1.9"/><rect x="524.4" y="865.1" width="1.9" height="1.9"/><rect x="524.4" y="903.4" width="1.9" height="1.9"/><rect x="524.4" y="941.7" width="1.9" height="1.9"/><rect x="524.4" y="980.0" width="1.9" height="1.9"/><rect x="562.7" y="137.8" width="1.9" height="1.9"/><rect x="562.7" y="176.1" width="1.9" height="1.9"/><rect x="562.7" y="214.4" width="1.9" height="1.9"/><rect x="562.7" y="252.7" width="1.9" height="1.9"/><rect x="562.7" y="290.9" width="1.9" height="1.9"/><rect x="562.7" y="329.2" width="1.9" height="1.9"/><rect x="562.7" y="367.5" width="1.9" height="1.9"/><rect x="562.7" y="405.8" width="1.9" height="1.9"/><rect x="562.7" y="444.1" width="1.9" height="1.9"/><rect x="562.7" y="482.4" width="1.9" height="1.9"/><rect x="562.7" y="520.6" width="1.9" height="1.9"/><rect x="562.7" y="558.9" width="1.9" height="1.9"/><rect x="562.7" y="597.2" width="1.9" height="1.9"/><rect x="562.7" y="635.5" width="1.9" height="1.9"/><rect x="562.7" y="673.8" width="1.9" height="1.9"/><rect x="562.7" y="712.0" width="1.9" height="1.9"/><rect x="562.7" y="750.3" width="1.9" height="1.9"/><rect x="562.7" y="788.6" width="1.9" height="1.9"/><rect x="562.7" y="826.9" width="1.9" height="1.9"/><rect x="562.7" y="865.1" width="1.9" height="1.9"/><rect x="562.7" y="903.4" width="1.9" height="1.9"/><rect x="562.7" y="941.7" width="1.9" height="1.9"/><rect x="562.7" y="980.0" width="1.9" height="1.9"/><rect x="601.0" y="137.8" width="1.9" height="1.9"/><rect x="601.0" y="176.1" width="1.9" height="1.9"/><rect x="601.0" y="214.4" width="1.9" height="1.9"/><rect x="601.0" y="252.7" width="1.9" height="1.9"/><rect x="601.0" y="290.9" width="1.9" height="1.9"/><rect x="601.0" y="329.2" width="1.9" height="1.9"/><rect x="601.0" y="367.5" width="1.9" height="1.9"/><rect x="601.0" y="405.8" width="1.9" height="1.9"/><rect x="601.0" y="444.1" width="1.9" height="1.9"/><rect x="601.0" y="482.4" width="1.9" height="1.9"/><rect x="601.0" y="520.6" width="1.9" height="1.9"/><rect x="601.0" y="558.9" width="1.9" height="1.9"/><rect x="601.0" y="597.2" width="1.9" height="1.9"/><rect x="601.0" y="635.5" width="1.9" height="1.9"/><rect x="601.0" y="673.8" width="1.9" height="1.9"/><rect x="601.0" y="712.0" width="1.9" height="1.9"/><rect x="601.0" y="750.3" width="1.9" height="1.9"/><rect x="601.0" y="788.6" width="1.9" height="1.9"/><rect x="601.0" y="826.9" width="1.9" height="1.9"/><rect x="601.0" y="865.1" width="1.9" height="1.9"/><rect x="601.0" y="903.4" width="1.9" height="1.9"/><rect x="601.0" y="941.7" width="1.9" height="1.9"/><rect x="601.0" y="980.0" width="1.9" height="1.9"/><rect x="639.2" y="137.8" width="1.9" height="1.9"/><rect x="639.2" y="176.1" width="1.9" height="1.9"/><rect x="639.2" y="214.4" width="1.9" height="1.9"/><rect x="639.2" y="252.7" width="1.9" height="1.9"/><rect x="639.2" y="290.9" width="1.9" height="1.9"/><rect x="639.2" y="329.2" width="1.9" height="1.9"/><rect x="639.2" y="367.5" width="1.9" height="1.9"/><rect x="639.2" y="405.8" width="1.9" height="1.9"/><rect x="639.2" y="444.1" width="1.9" height="1.9"/><rect x="639.2" y="482.4" width="1.9" height="1.9"/><rect x="639.2" y="520.6" width="1.9" height="1.9"/><rect x="639.2" y="558.9" width="1.9" height="1.9"/><rect x="639.2" y="597.2" width="1.9" height="1.9"/><rect x="639.2" y="635.5" width="1.9" height="1.9"/><rect x="639.2" y="673.8" width="1.9" height="1.9"/><rect x="639.2" y="712.0" width="1.9" height="1.9"/><rect x="639.2" y="750.3" width="1.9" height="1.9"/><rect x="639.2" y="788.6" width="1.9" height="1.9"/><rect x="639.2" y="826.9" width="1.9" height="1.9"/><rect x="639.2" y="865.1" width="1.9" height="1.9"/><rect x="639.2" y="903.4" width="1.9" height="1.9"/><rect x="639.2" y="941.7" width="1.9" height="1.9"/><rect x="639.2" y="980.0" width="1.9" height="1.9"/><rect x="677.5" y="137.8" width="1.9" height="1.9"/><rect x="677.5" y="176.1" width="1.9" height="1.9"/><rect x="677.5" y="214.4" width="1.9" height="1.9"/><rect x="677.5" y="252.7" width="1.9" height="1.9"/><rect x="677.5" y="290.9" width="1.9" height="1.9"/><rect x="677.5" y="329.2" width="1.9" height="1.9"/><rect x="677.5" y="367.5" width="1.9" height="1.9"/><rect x="677.5" y="405.8" width="1.9" height="1.9"/><rect x="677.5" y="444.1" width="1.9" height="1.9"/><rect x="677.5" y="482.4" width="1.9" height="1.9"/><rect x="677.5" y="520.6" width="1.9" height="1.9"/><rect x="677.5" y="558.9" width="1.9" height="1.9"/><rect x="677.5" y="597.2" width="1.9" height="1.9"/><rect x="677.5" y="635.5" width="1.9" height="1.9"/><rect x="677.5" y="673.8" width="1.9" height="1.9"/><rect x="677.5" y="712.0" width="1.9" height="1.9"/><rect x="677.5" y="750.3" width="1.9" height="1.9"/><rect x="677.5" y="788.6" width="1.9" height="1.9"/><rect x="677.5" y="826.9" width="1.9" height="1.9"/><rect x="677.5" y="865.1" width="1.9" height="1.9"/><rect x="677.5" y="903.4" width="1.9" height="1.9"/><rect x="677.5" y="941.7" width="1.9" height="1.9"/><rect x="677.5" y="980.0" width="1.9" height="1.9"/><rect x="715.8" y="137.8" width="1.9" height="1.9"/><rect x="715.8" y="176.1" width="1.9" height="1.9"/><rect x="715.8" y="214.4" width="1.9" height="1.9"/><rect x="715.8" y="252.7" width="1.9" height="1.9"/><rect x="715.8" y="290.9" width="1.9" height="1.9"/><rect x="715.8" y="329.2" width="1.9" height="1.9"/><rect x="715.8" y="367.5" width="1.9" height="1.9"/><rect x="715.8" y="405.8" width="1.9" height="1.9"/><rect x="715.8" y="444.1" width="1.9" height="1.9"/><rect x="715.8" y="482.4" width="1.9" height="1.9"/><rect x="715.8" y="520.6" width="1.9" height="1.9"/><rect x="715.8" y="558.9" width="1.9" height="1.9"/><rect x="715.8" y="597.2" width="1.9" height="1.9"/><rect x="715.8" y="635.5" width="1.9" height="1.9"/><rect x="715.8" y="673.8" width="1.9" height="1.9"/><rect x="715.8" y="712.0" width="1.9" height="1.9"/><rect x="715.8" y="750.3" width="1.9" height="1.9"/><rect x="715.8" y="788.6" width="1.9" height="1.9"/><rect x="715.8" y="826.9" width="1.9" height="1.9"/><rect x="715.8" y="865.1" width="1.9" height="1.9"/><rect x="715.8" y="903.4" width="1.9" height="1.9"/><rect x="715.8" y="941.7" width="1.9" height="1.9"/><rect x="715.8" y="980.0" width="1.9" height="1.9"/><rect x="754.1" y="137.8" width="1.9" height="1.9"/><rect x="754.1" y="176.1" width="1.9" height="1.9"/><rect x="754.1" y="214.4" width="1.9" height="1.9"/><rect x="754.1" y="252.7" width="1.9" height="1.9"/><rect x="754.1" y="290.9" width="1.9" height="1.9"/><rect x="754.1" y="329.2" width="1.9" height="1.9"/><rect x="754.1" y="367.5" width="1.9" height="1.9"/><rect x="754.1" y="405.8" width="1.9" height="1.9"/><rect x="754.1" y="444.1" width="1.9" height="1.9"/><rect x="754.1" y="482.4" width="1.9" height="1.9"/><rect x="754.1" y="520.6" width="1.9" height="1.9"/><rect x="754.1" y="558.9" width="1.9" height="1.9"/><rect x="754.1" y="597.2" width="1.9" height="1.9"/><rect x="754.1" y="635.5" width="1.9" height="1.9"/><rect x="754.1" y="673.8" width="1.9" height="1.9"/><rect x="754.1" y="712.0" width="1.9" height="1.9"/><rect x="754.1" y="750.3" width="1.9" height="1.9"/><rect x="754.1" y="788.6" width="1.9" height="1.9"/><rect x="754.1" y="826.9" width="1.9" height="1.9"/><rect x="754.1" y="865.1" width="1.9" height="1.9"/><rect x="754.1" y="903.4" width="1.9" height="1.9"/><rect x="754.1" y="941.7" width="1.9" height="1.9"/><rect x="754.1" y="980.0" width="1.9" height="1.9"/><rect x="792.4" y="137.8" width="1.9" height="1.9"/><rect x="792.4" y="176.1" width="1.9" height="1.9"/><rect x="792.4" y="214.4" width="1.9" height="1.9"/><rect x="792.4" y="252.7" width="1.9" height="1.9"/><rect x="792.4" y="290.9" width="1.9" height="1.9"/><rect x="792.4" y="329.2" width="1.9" height="1.9"/><rect x="792.4" y="367.5" width="1.9" height="1.9"/><rect x="792.4" y="405.8" width="1.9" height="1.9"/><rect x="792.4" y="444.1" width="1.9" height="1.9"/><rect x="792.4" y="482.4" width="1.9" height="1.9"/><rect x="792.4" y="520.6" width="1.9" height="1.9"/><rect x="792.4" y="558.9" width="1.9" height="1.9"/><rect x="792.4" y="597.2" width="1.9" height="1.9"/><rect x="792.4" y="635.5" width="1.9" height="1.9"/><rect x="792.4" y="673.8" width="1.9" height="1.9"/><rect x="792.4" y="712.0" width="1.9" height="1.9"/><rect x="792.4" y="750.3" width="1.9" height="1.9"/><rect x="792.4" y="788.6" width="1.9" height="1.9"/><rect x="792.4" y="826.9" width="1.9" height="1.9"/><rect x="792.4" y="865.1" width="1.9" height="1.9"/><rect x="792.4" y="903.4" width="1.9" height="1.9"/><rect x="792.4" y="941.7" width="1.9" height="1.9"/><rect x="792.4" y="980.0" width="1.9" height="1.9"/><rect x="830.6" y="137.8" width="1.9" height="1.9"/><rect x="830.6" y="176.1" width="1.9" height="1.9"/><rect x="830.6" y="214.4" width="1.9" height="1.9"/><rect x="830.6" y="252.7" width="1.9" height="1.9"/><rect x="830.6" y="290.9" width="1.9" height="1.9"/><rect x="830.6" y="329.2" width="1.9" height="1.9"/><rect x="830.6" y="367.5" width="1.9" height="1.9"/><rect x="830.6" y="405.8" width="1.9" height="1.9"/><rect x="830.6" y="444.1" width="1.9" height="1.9"/><rect x="830.6" y="482.4" width="1.9" height="1.9"/><rect x="830.6" y="520.6" width="1.9" height="1.9"/><rect x="830.6" y="558.9" width="1.9" height="1.9"/><rect x="830.6" y="597.2" width="1.9" height="1.9"/><rect x="830.6" y="635.5" width="1.9" height="1.9"/><rect x="830.6" y="673.8" width="1.9" height="1.9"/><rect x="830.6" y="712.0" width="1.9" height="1.9"/><rect x="830.6" y="750.3" width="1.9" height="1.9"/><rect x="830.6" y="788.6" width="1.9" height="1.9"/><rect x="830.6" y="826.9" width="1.9" height="1.9"/><rect x="830.6" y="865.1" width="1.9" height="1.9"/><rect x="830.6" y="903.4" width="1.9" height="1.9"/><rect x="830.6" y="941.7" width="1.9" height="1.9"/><rect x="830.6" y="980.0" width="1.9" height="1.9"/><rect x="868.9" y="137.8" width="1.9" height="1.9"/><rect x="868.9" y="176.1" width="1.9" height="1.9"/><rect x="868.9" y="214.4" width="1.9" height="1.9"/><rect x="868.9" y="252.7" width="1.9" height="1.9"/><rect x="868.9" y="290.9" width="1.9" height="1.9"/><rect x="868.9" y="329.2" width="1.9" height="1.9"/><rect x="868.9" y="367.5" width="1.9" height="1.9"/><rect x="868.9" y="405.8" width="1.9" height="1.9"/><rect x="868.9" y="444.1" width="1.9" height="1.9"/><rect x="868.9" y="482.4" width="1.9" height="1.9"/><rect x="868.9" y="520.6" width="1.9" height="1.9"/><rect x="868.9" y="558.9" width="1.9" height="1.9"/><rect x="868.9" y="597.2" width="1.9" height="1.9"/><rect x="868.9" y="635.5" width="1.9" height="1.9"/><rect x="868.9" y="673.8" width="1.9" height="1.9"/><rect x="868.9" y="712.0" width="1.9" height="1.9"/><rect x="868.9" y="750.3" width="1.9" height="1.9"/><rect x="868.9" y="788.6" width="1.9" height="1.9"/><rect x="868.9" y="826.9" width="1.9" height="1.9"/><rect x="868.9" y="865.1" width="1.9" height="1.9"/><rect x="868.9" y="903.4" width="1.9" height="1.9"/><rect x="868.9" y="941.7" width="1.9" height="1.9"/><rect x="868.9" y="980.0" width="1.9" height="1.9"/><rect x="907.2" y="137.8" width="1.9" height="1.9"/><rect x="907.2" y="176.1" width="1.9" height="1.9"/><rect x="907.2" y="214.4" width="1.9" height="1.9"/><rect x="907.2" y="252.7" width="1.9" height="1.9"/><rect x="907.2" y="290.9" width="1.9" height="1.9"/><rect x="907.2" y="329.2" width="1.9" height="1.9"/><rect x="907.2" y="367.5" width="1.9" height="1.9"/><rect x="907.2" y="405.8" width="1.9" height="1.9"/><rect x="907.2" y="444.1" width="1.9" height="1.9"/><rect x="907.2" y="482.4" width="1.9" height="1.9"/><rect x="907.2" y="520.6" width="1.9" height="1.9"/><rect x="907.2" y="558.9" width="1.9" height="1.9"/><rect x="907.2" y="597.2" width="1.9" height="1.9"/><rect x="907.2" y="635.5" width="1.9" height="1.9"/><rect x="907.2" y="673.8" width="1.9" height="1.9"/><rect x="907.2" y="712.0" width="1.9" height="1.9"/><rect x="907.2" y="750.3" width="1.9" height="1.9"/><rect x="907.2" y="788.6" width="1.9" height="1.9"/><rect x="907.2" y="826.9" width="1.9" height="1.9"/><rect x="907.2" y="865.1" width="1.9" height="1.9"/><rect x="907.2" y="903.4" width="1.9" height="1.9"/><rect x="907.2" y="941.7" width="1.9" height="1.9"/><rect x="907.2" y="980.0" width="1.9" height="1.9"/><rect x="945.5" y="137.8" width="1.9" height="1.9"/><rect x="945.5" y="176.1" width="1.9" height="1.9"/><rect x="945.5" y="214.4" width="1.9" height="1.9"/><rect x="945.5" y="252.7" width="1.9" height="1.9"/><rect x="945.5" y="290.9" width="1.9" height="1.9"/><rect x="945.5" y="329.2" width="1.9" height="1.9"/><rect x="945.5" y="367.5" width="1.9" height="1.9"/><rect x="945.5" y="405.8" width="1.9" height="1.9"/><rect x="945.5" y="444.1" width="1.9" height="1.9"/><rect x="945.5" y="482.4" width="1.9" height="1.9"/><rect x="945.5" y="520.6" width="1.9" height="1.9"/><rect x="945.5" y="558.9" width="1.9" height="1.9"/><rect x="945.5" y="597.2" width="1.9" height="1.9"/><rect x="945.5" y="635.5" width="1.9" height="1.9"/><rect x="945.5" y="673.8" width="1.9" height="1.9"/><rect x="945.5" y="712.0" width="1.9" height="1.9"/><rect x="945.5" y="750.3" width="1.9" height="1.9"/><rect x="945.5" y="788.6" width="1.9" height="1.9"/><rect x="945.5" y="826.9" width="1.9" height="1.9"/><rect x="945.5" y="865.1" width="1.9" height="1.9"/><rect x="945.5" y="903.4" width="1.9" height="1.9"/><rect x="945.5" y="941.7" width="1.9" height="1.9"/><rect x="945.5" y="980.0" width="1.9" height="1.9"/><rect x="983.8" y="137.8" width="1.9" height="1.9"/><rect x="983.8" y="176.1" width="1.9" height="1.9"/><rect x="983.8" y="214.4" width="1.9" height="1.9"/><rect x="983.8" y="252.7" width="1.9" height="1.9"/><rect x="983.8" y="290.9" width="1.9" height="1.9"/><rect x="983.8" y="329.2" width="1.9" height="1.9"/><rect x="983.8" y="367.5" width="1.9" height="1.9"/><rect x="983.8" y="405.8" width="1.9" height="1.9"/><rect x="983.8" y="444.1" width="1.9" height="1.9"/><rect x="983.8" y="482.4" width="1.9" height="1.9"/><rect x="983.8" y="520.6" width="1.9" height="1.9"/><rect x="983.8" y="558.9" width="1.9" height="1.9"/><rect x="983.8" y="597.2" width="1.9" height="1.9"/><rect x="983.8" y="635.5" width="1.9" height="1.9"/><rect x="983.8" y="673.8" width="1.9" height="1.9"/><rect x="983.8" y="712.0" width="1.9" height="1.9"/><rect x="983.8" y="750.3" width="1.9" height="1.9"/><rect x="983.8" y="788.6" width="1.9" height="1.9"/><rect x="983.8" y="826.9" width="1.9" height="1.9"/><rect x="983.8" y="865.1" width="1.9" height="1.9"/><rect x="983.8" y="903.4" width="1.9" height="1.9"/><rect x="983.8" y="941.7" width="1.9" height="1.9"/><rect x="983.8" y="980.0" width="1.9" height="1.9"/><rect x="1022.0" y="137.8" width="1.9" height="1.9"/><rect x="1022.0" y="176.1" width="1.9" height="1.9"/><rect x="1022.0" y="214.4" width="1.9" height="1.9"/><rect x="1022.0" y="252.7" width="1.9" height="1.9"/><rect x="1022.0" y="290.9" width="1.9" height="1.9"/><rect x="1022.0" y="329.2" width="1.9" height="1.9"/><rect x="1022.0" y="367.5" width="1.9" height="1.9"/><rect x="1022.0" y="405.8" width="1.9" height="1.9"/><rect x="1022.0" y="444.1" width="1.9" height="1.9"/><rect x="1022.0" y="482.4" width="1.9" height="1.9"/><rect x="1022.0" y="520.6" width="1.9" height="1.9"/><rect x="1022.0" y="558.9" width="1.9" height="1.9"/><rect x="1022.0" y="597.2" width="1.9" height="1.9"/><rect x="1022.0" y="635.5" width="1.9" height="1.9"/><rect x="1022.0" y="673.8" width="1.9" height="1.9"/><rect x="1022.0" y="712.0" width="1.9" height="1.9"/><rect x="1022.0" y="750.3" width="1.9" height="1.9"/><rect x="1022.0" y="788.6" width="1.9" height="1.9"/><rect x="1022.0" y="826.9" width="1.9" height="1.9"/><rect x="1022.0" y="865.1" width="1.9" height="1.9"/><rect x="1022.0" y="903.4" width="1.9" height="1.9"/><rect x="1022.0" y="941.7" width="1.9" height="1.9"/><rect x="1022.0" y="980.0" width="1.9" height="1.9"/></g></svg>
<div class="a" style="left:177.6px;top:271.4px;width:207.70000000000002px;height:17.100000000000023px;background:#ffffe1;border:1.3px solid #a8a8a0"></div>
<div class="a" style="left:269.79999999999995px;top:271.4px;width:1.3px;height:17.100000000000023px;background:#a8a8a0"></div>
<div class="t cell" style="left:181.1px;top:272.9px;letter-spacing:0.49px">Fluid</div>
<div class="t cell" style="left:273.9px;top:272.9px;letter-spacing:1.05px">water</div>
<div class="a" style="left:177.6px;top:291.7px;width:207.70000000000002px;height:35.69999999999999px;background:#ffffe1;border:1.3px solid #a8a8a0"></div>
<div class="a" style="left:269.79999999999995px;top:291.7px;width:1.3px;height:35.69999999999999px;background:#a8a8a0"></div>
<div class="a" style="left:177.6px;top:309.59999999999997px;width:207.70000000000002px;height:1.3px;background:#a8a8a0"></div>
<div class="t cell" style="left:181.1px;top:293.2px;letter-spacing:0.47px">Flow</div>
<div class="t cell" style="left:273.9px;top:293.2px;letter-spacing:0.88px">7054.2216 m3/h</div>
<div class="t cell" style="left:181.1px;top:311.7px;letter-spacing:0.72px">Temperature</div>
<div class="t cell" style="left:273.9px;top:311.7px;letter-spacing:0.75px">263.000 C</div>
<div class="a" style="left:423.5px;top:381.5px;width:226.70000000000005px;height:53.0px;background:#ffffe1;border:1.3px solid #a8a8a0"></div>
<div class="a" style="left:534.6999999999999px;top:381.5px;width:1.3px;height:53.0px;background:#a8a8a0"></div>
<div class="a" style="left:423.5px;top:399.0px;width:226.70000000000005px;height:1.3px;background:#a8a8a0"></div>
<div class="a" style="left:423.5px;top:416.9px;width:226.70000000000005px;height:1.3px;background:#a8a8a0"></div>
<div class="t cell" style="left:427.0px;top:383.0px;letter-spacing:0.47px">Flow</div>
<div class="t cell" style="left:538.8px;top:383.0px;letter-spacing:0.75px">7056.3332 m3/h</div>
<div class="t cell" style="left:427.0px;top:401.1px;letter-spacing:0.54px">Out Fluid Phase</div>
<div class="t cell" style="left:538.8px;top:401.1px;letter-spacing:0.47px">Gas or Vapor</div>
<div class="t cell" style="left:427.0px;top:419.0px;letter-spacing:0.62px">Out Density</div>
<div class="t cell" style="left:538.8px;top:419.0px;letter-spacing:0.75px">2.550 kg/m3</div>
<div class="a" style="left:544.5px;top:495.5px;width:216.70000000000005px;height:53.0px;background:#ffffe1;border:1.3px solid #a8a8a0"></div>
<div class="a" style="left:645.6999999999999px;top:495.5px;width:1.3px;height:53.0px;background:#a8a8a0"></div>
<div class="a" style="left:544.5px;top:512.6999999999999px;width:216.70000000000005px;height:1.3px;background:#a8a8a0"></div>
<div class="a" style="left:544.5px;top:530.6px;width:216.70000000000005px;height:1.3px;background:#a8a8a0"></div>
<div class="t cell" style="left:548.0px;top:497.0px;letter-spacing:0.47px">Flow</div>
<div class="t cell" style="left:649.8px;top:497.0px;letter-spacing:0.75px">2822.9108 m3/h</div>
<div class="t cell" style="left:548.0px;top:514.8px;letter-spacing:0.6px">In Fluid Phase</div>
<div class="t cell" style="left:649.8px;top:514.8px;letter-spacing:0.45px">2 Phase</div>
<div class="t cell" style="left:548.0px;top:532.7px;letter-spacing:0.75px">In Density</div>
<div class="t cell" style="left:649.8px;top:532.7px;letter-spacing:0.75px">19.129 kg/m3</div>
<div class="a" style="left:423.6px;top:587.0px;width:217.60000000000002px;height:53.39999999999998px;background:#ffffe1;border:1.3px solid #a8a8a0"></div>
<div class="a" style="left:534.9px;top:587.0px;width:1.3px;height:53.39999999999998px;background:#a8a8a0"></div>
<div class="a" style="left:423.6px;top:604.4px;width:217.60000000000002px;height:1.3px;background:#a8a8a0"></div>
<div class="a" style="left:423.6px;top:622.4px;width:217.60000000000002px;height:1.3px;background:#a8a8a0"></div>
<div class="t cell" style="left:427.1px;top:588.5px;letter-spacing:0.47px">Flow</div>
<div class="t cell" style="left:539.0px;top:588.5px;letter-spacing:0.97px">36.0126 m3/h</div>
<div class="t cell" style="left:427.1px;top:606.5px;letter-spacing:0.54px">Out Fluid Phase</div>
<div class="t cell" style="left:539.0px;top:606.5px;letter-spacing:0.75px">Liquid</div>
<div class="t cell" style="left:427.1px;top:624.5px;letter-spacing:0.62px">Out Density</div>
<div class="t cell" style="left:539.0px;top:624.5px;letter-spacing:0.75px">999.650 kg/m3</div>
<div class="a" style="left:193.6px;top:692.7px;width:191.9px;height:17.399999999999977px;background:#ffffe1;border:1.3px solid #a8a8a0"></div>
<div class="a" style="left:285.5px;top:692.7px;width:1.3px;height:17.399999999999977px;background:#a8a8a0"></div>
<div class="t cell" style="left:197.1px;top:694.2px;letter-spacing:0.49px">Fluid</div>
<div class="t cell" style="left:289.6px;top:694.2px;letter-spacing:1.05px">water</div>
<div class="a" style="left:193.6px;top:713.0px;width:191.9px;height:35.5px;background:#ffffe1;border:1.3px solid #a8a8a0"></div>
<div class="a" style="left:285.5px;top:713.0px;width:1.3px;height:35.5px;background:#a8a8a0"></div>
<div class="a" style="left:193.6px;top:730.6px;width:191.9px;height:1.3px;background:#a8a8a0"></div>
<div class="t cell" style="left:197.1px;top:714.5px;letter-spacing:0.47px">Flow</div>
<div class="t cell" style="left:289.6px;top:714.5px;letter-spacing:0.97px">36.0126 m3/h</div>
<div class="t cell" style="left:197.1px;top:732.7px;letter-spacing:0.72px">Temperature</div>
<div class="t cell" style="left:289.6px;top:732.7px;letter-spacing:0.75px">12.778 C</div>
<svg class="a" style="left:0;top:0" width="1024" height="1003"><line x1="411.5" y1="313.5" x2="411.5" y2="465" stroke="#d41212" stroke-width="3.2"/>
<line x1="411.5" y1="500.5" x2="411.5" y2="690" stroke="#0a0acc" stroke-width="3.2"/>
<line x1="428.5" y1="483.3" x2="886" y2="483.3" stroke="#1a7272" stroke-width="3.2"/>
<rect x="394" y="282.3" width="34" height="26" fill="#00ffff" stroke="#0a5a5a" stroke-width="1.6"/><line x1="403.5" y1="274.3" x2="418" y2="274.3" stroke="#222" stroke-width="2.2" stroke-linecap="round"/><line x1="407.6" y1="274.3" x2="407.6" y2="282.3" stroke="#222" stroke-width="1.4"/><line x1="414.4" y1="274.3" x2="414.4" y2="282.3" stroke="#222" stroke-width="1.4"/><polyline points="397.6,303.0 409.1,292.7 408.8,300.6 421.5,288.8" fill="none" stroke="#0a3a3a" stroke-width="1.3"/><polygon points="423,286.8 416.5,289.8 420.5,293.3" fill="none" stroke="#0a3a3a" stroke-width="1.2"/>
<rect x="394" y="703.6" width="34" height="26" fill="#00ffff" stroke="#0a5a5a" stroke-width="1.6"/><line x1="403.5" y1="695.4" x2="418" y2="695.4" stroke="#222" stroke-width="2.2" stroke-linecap="round"/><line x1="407.6" y1="695.4" x2="407.6" y2="703.6" stroke="#222" stroke-width="1.4"/><line x1="414.4" y1="695.4" x2="414.4" y2="703.6" stroke="#222" stroke-width="1.4"/><polyline points="397.6,724.3000000000001 409.1,714.0 408.8,721.9 421.5,710.1" fill="none" stroke="#0a3a3a" stroke-width="1.3"/><polygon points="423,708.1 416.5,711.1 420.5,714.6" fill="none" stroke="#0a3a3a" stroke-width="1.2"/>
<circle cx="411.5" cy="311.4" r="2.3" fill="#fff" stroke="#c8c8c8" stroke-width="0.8"/>
<circle cx="411.5" cy="692.4" r="2.3" fill="#fff" stroke="#c8c8c8" stroke-width="0.8"/>
<circle cx="411.3" cy="483" r="11.6" fill="#fff" stroke="#3a3a3a" stroke-width="1.3"/>
<text x="411.2" y="485.8" font-size="9" font-weight="bold" text-anchor="middle" fill="#333" font-family="Liberation Sans">C</text>
<circle cx="411.3" cy="467.4" r="2.3" fill="#fff" stroke="#c8c8c8" stroke-width="0.8"/>
<circle cx="411.3" cy="498.4" r="2.3" fill="#fff" stroke="#c8c8c8" stroke-width="0.8"/>
<circle cx="426.4" cy="483.2" r="2.3" fill="#fff" stroke="#c8c8c8" stroke-width="0.8"/>
<polygon points="406.2,450.2 416.6,450.2 411.4,460.2" fill="#00ffff" stroke="#0a4a4a" stroke-width="1.4" stroke-linejoin="round"/>
<polygon points="406.2,516.6 416.6,516.6 411.4,506.2" fill="#00ffff" stroke="#0a4a4a" stroke-width="1.4" stroke-linejoin="round"/>
<polygon points="870.4,478.2 870.4,488.6 883.4,483.3" fill="#00ffff" stroke="#0a4a4a" stroke-width="1.4" stroke-linejoin="round"/>
<rect x="892.3" y="476" width="32.6" height="22.6" fill="#00ffff" stroke="#0a5a5a" stroke-width="1.6"/>
<line x1="892.3" y1="465.6" x2="892.3" y2="477" stroke="#444" stroke-width="1.5"/>
<line x1="924.9" y1="466.5" x2="924.9" y2="477" stroke="#444" stroke-width="1.5"/>
<g stroke="#0a5a5a" stroke-width="1.6"><line x1="899" y1="480.5" x2="917.5" y2="480.5"/><line x1="902.8" y1="483.4" x2="914" y2="483.4"/><line x1="905.6" y1="486.4" x2="911.2" y2="486.4"/><line x1="907.8" y1="489.2" x2="909.6" y2="489.2"/></g>
<circle cx="888.6" cy="483.3" r="2.3" fill="#fff" stroke="#c8c8c8" stroke-width="0.8"/>
<rect x="402.2" y="379.3" width="18.6" height="19.6" fill="#fff" stroke="#333" stroke-width="1.4"/><text x="411.5" y="393.90000000000003" font-size="13" text-anchor="middle" fill="#333" font-family="Liberation Sans" stroke="#333" stroke-width="0.3">-1</text><circle cx="411.7" cy="379.3" r="1.3" fill="#333"/><circle cx="411.7" cy="398.90000000000003" r="1.3" fill="#333"/>
<rect x="648.2" y="474.0" width="18.6" height="19.6" fill="#fff" stroke="#333" stroke-width="1.4"/><text x="657.5" y="488.6" font-size="13" text-anchor="middle" fill="#333" font-family="Liberation Sans" stroke="#333" stroke-width="0.3">-2</text><circle cx="648.2" cy="483.6" r="1.3" fill="#333"/><circle cx="666.8000000000001" cy="483.6" r="1.3" fill="#333"/>
<rect x="402.2" y="584.7" width="18.6" height="19.6" fill="#fff" stroke="#333" stroke-width="1.4"/><text x="411.5" y="599.3000000000001" font-size="13" text-anchor="middle" fill="#333" font-family="Liberation Sans" stroke="#333" stroke-width="0.3">-3</text><circle cx="411.7" cy="584.7" r="1.3" fill="#333"/><circle cx="411.7" cy="604.3000000000001" r="1.3" fill="#333"/>
<text x="391.8" y="265.2" font-size="12" fill="#333" font-family="Liberation Sans" stroke="#333" stroke-width="0.3">1</text>
<text x="390.9" y="686.5" font-size="12" fill="#333" font-family="Liberation Sans" stroke="#333" stroke-width="0.3">2</text>
<text x="889.2" y="456.8" font-size="12" fill="#333" font-family="Liberation Sans" stroke="#333" stroke-width="0.3">3</text>
<text x="396.2" y="461.5" font-size="12" fill="#333" font-family="Liberation Sans" stroke="#333" stroke-width="0.3">4</text></svg>
</body></html>
